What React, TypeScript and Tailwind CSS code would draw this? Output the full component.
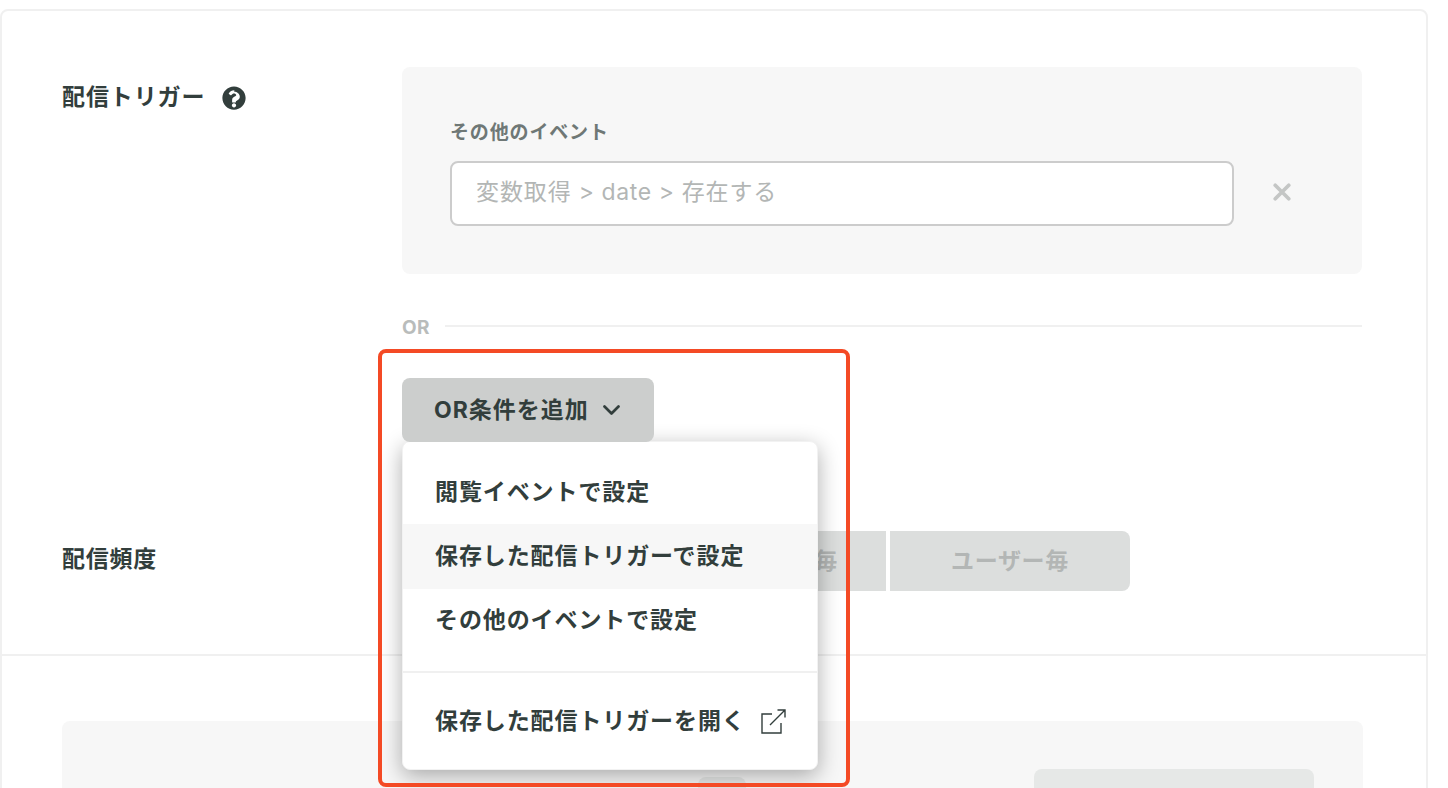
import React from "react";

const font = "font-['Inter','Noto_Sans_CJK_JP',sans-serif]";

function Help() {
  return (
    <svg viewBox="0 0 512 512" className="w-6 h-6 ml-[17px] mt-[1px]" fill="#323e3c">
      <path d="M504 256c0 137-111 248-248 248S8 393 8 256C8 119 119 8 256 8s248 111 248 248zM262.700 90c-54.500 0-89.300 23-116.500 63.800-3.500 5.300-2.400 12.400 2.700 16.300l34.700 26.300c5.200 3.900 12.600 3 16.700-2.100 17.900-22.700 30.100-35.800 57.300-35.800 20.400 0 45.700 13.100 45.700 33 0 15-12.400 22.700-32.600 34-23.600 13.200-54.800 29.700-54.800 70.900V340c0 6.600 5.400 12 12 12h56c6.600 0 12-5.400 12-12v-5.300c0-28.600 83.500-29.800 83.500-107.100 0-58.200-60.400-102.600-117-102.600zM256 366c-25.400 0-46 20.600-46 46 0 25.400 20.600 46 46 46s46-20.600 46-46c0-25.400-20.600-46-46-46z" />
    </svg>
  );
}

function MenuItem({ label, active }: { label: string; active?: boolean }) {
  return (
    <div className={`h-[65px] flex items-center pl-[32px] text-[23px] leading-none font-bold tracking-[0.9px] text-[#323e3c] ${active ? "bg-[#f7f7f7]" : ""}`}>
      {label}
    </div>
  );
}

export default function App() {
  return (
    <div className={`${font} bg-white h-[788px] overflow-hidden pt-[9px] text-[#323e3c]`}>
      <div className="w-[1428px] h-[900px] border-2 border-[#f0f0f0] rounded-lg">
        {/* upper section */}
        <div className="h-[645px] border-b-2 border-[#f0f0f0] pl-[60px] pr-[64px] pt-[56px] flex">
          <div className="w-[340px] shrink-0">
            <div className="flex items-center h-[32px] mt-[14px] text-[23px] font-bold tracking-[0.9px]">
              配信トリガー
              <Help />
            </div>
            <div className="mt-[430px] text-[23px] leading-[32px] font-bold tracking-[0.75px]">配信頻度</div>
          </div>
          <div className="flex-1 relative">
            <div className="h-[207px] bg-[#f7f7f7] rounded-lg pl-[48px] pt-[54px]">
              <div className="text-[19px] leading-[24px] font-bold tracking-[0.85px] text-[#6f7876]">その他のイベント</div>
              <div className="flex items-center mt-[16px]">
                <div className="w-[784px] h-[65px] bg-white border-2 border-[#cccccc] rounded-lg flex items-center pl-[24px] pb-[2px] text-[23px] tracking-[0.9px] text-[#b3b6b5] whitespace-pre">
                  <span>変数取得</span>
                  <span className="tracking-[0.6px]"> &gt; date &gt; </span>
                  <span>存在する</span>
                </div>
                <svg viewBox="0 0 16 16" className="w-[18px] h-[18px] ml-[39px] mb-[3px]" fill="none" stroke="#c4c6c5" strokeWidth="3.300" strokeLinecap="round">
                  <path d="M2 2 14 14M14 2 2 14" />
                </svg>
              </div>
            </div>
            <div className="flex items-center mt-[42px] h-[22px]">
              <span className="mt-[2px] text-[19px] font-bold tracking-[0.3px] text-[#b9bcbb]">OR</span>
              <div className="flex-1 h-[2px] bg-[#f0f0f0] ml-[15px] mt-[-2px]" />
            </div>

            <div className="relative z-[11] mt-[40px] w-[252px] h-[64px] rounded-lg bg-[#cccecd] flex items-center pl-[32px] text-[23px] font-bold tracking-[1px]">
              OR条件を追加
              <svg viewBox="0 0 17 10" className="w-[17px] h-[10px] ml-[14px]" fill="none" stroke="#323e3c" strokeWidth="2.700" strokeLinecap="round" strokeLinejoin="round">
                <path d="M1.500 1.500 8.500 8.500l7-7" />
              </svg>
            </div>

            {/* frequency buttons */}
            <div className="mt-[89px] flex h-[60px] text-[23px] font-bold tracking-[0.7px] text-[#b3b6b5]">
              <div className="w-[484px] bg-[#dcdedd] rounded-l-lg flex items-center justify-end pr-[48px]">セッション毎</div>
              <div className="w-[240px] ml-[4px] bg-[#dcdedd] rounded-r-lg flex items-center justify-center">ユーザー毎</div>
            </div>

            {/* dropdown */}
            <div className="absolute left-0 top-[374px] w-[416px] h-[329px] bg-white rounded-lg shadow-[0_6px_22px_rgba(0,0,0,0.32)] border border-[#f2f2f2] pt-[18px] z-10 flex flex-col">
              <MenuItem label="閲覧イベントで設定" />
              <MenuItem label="保存した配信トリガーで設定" active />
              <MenuItem label="その他のイベントで設定" />
              <div className="mt-[18px] h-[2px] bg-[#f0f0f0]" />
              <div className="h-[97px] flex items-center pl-[32px] text-[23px] font-bold tracking-[0.9px]">
                保存した配信トリガーを開く
                <svg viewBox="0 0 25 25" className="w-[25px] h-[25px] ml-[15px]" fill="none" stroke="#323e3c" strokeWidth="1.400">
                  <path d="M11 5H1v19h19V14M9 16 24 1M16.500 1H24v7.500" />
                </svg>
              </div>
            </div>

            {/* highlight annotation */}
            <div className="absolute left-[-24px] top-[282px] w-[472px] h-[438px] border-4 border-[#f44a25] rounded-lg z-20 pointer-events-none" />
          </div>
        </div>

        {/* lower section */}
        <div className="pl-[60px] pr-[63px] pt-[65px]">
          <div className="h-[200px] bg-[#f7f7f7] rounded-lg relative">
            <div className="absolute left-[972px] top-[48px] w-[280px] h-[60px] rounded-lg bg-[#e6e8e7]" />
            <div className="absolute left-[636px] top-[56px] w-[48px] h-[40px] rounded-lg bg-[#e6e8e7]" />
          </div>
        </div>
      </div>
    </div>
  );
}
